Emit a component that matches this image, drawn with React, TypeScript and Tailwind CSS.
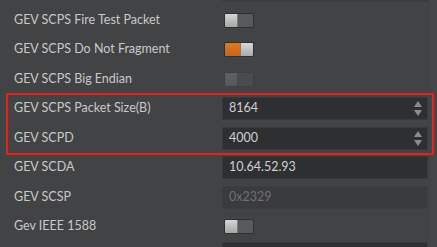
import React from "react";

function Toggle({ on = false, disabled = false }: { on?: boolean; disabled?: boolean }) {
  if (on) {
    return (
      <div className="flex h-[15px] w-[30px] rounded-[2px] overflow-hidden border border-[#2e2f31]">
        <div className="w-[16px] h-full bg-gradient-to-b from-[#dc7a22] to-[#c9641a]" />
        <div className="w-[13px] h-full bg-gradient-to-b from-[#d8d8d8] to-[#a9aaab] border-l border-[#7c7d7f]" />
      </div>
    );
  }
  return (
    <div
      className={
        "flex h-[15px] w-[30px] rounded-[2px] overflow-hidden border " +
        (disabled ? "border-[#3f4042] bg-[#4a4b4d]" : "border-[#2e2f31] bg-[#58595b]")
      }
    >
      <div
        className={
          "w-[13px] h-full border-r " +
          (disabled
            ? "bg-gradient-to-b from-[#606163] to-[#56575a] border-[#454648]"
            : "bg-gradient-to-b from-[#d6d6d6] to-[#a4a5a6] border-[#7a7b7d]")
        }
      />
    </div>
  );
}

function Spin() {
  return (
    <div className="flex flex-col items-center gap-[3px] mr-[5px]">
      <svg width="8" height="6" viewBox="0 0 8 6">
        <path d="M4 0 L8 6 L0 6 Z" fill="#8a8b8d" />
      </svg>
      <svg width="8" height="6" viewBox="0 0 8 6">
        <path d="M0 0 L8 0 L4 6 Z" fill="#8a8b8d" />
      </svg>
    </div>
  );
}

function Input({ value, spin = false, disabled = false }: { value: string; spin?: boolean; disabled?: boolean }) {
  return (
    <div
      className={
        "flex items-center justify-between h-[23px] w-[206px] border rounded-[1px] " +
        (disabled ? "bg-[#3a3b3d] border-[#3d3e40]" : "bg-[#2e2f31] border-[#38393b]")
      }
    >
      <span className={"pl-[6px] " + (disabled ? "text-[#6f7072]" : "text-[#cfd0d1]")}>{value}</span>
      {spin && <Spin />}
    </div>
  );
}

function Row({ label, children }: { label: string; children?: React.ReactNode }) {
  return (
    <div className="flex items-center h-[29.5px]">
      <div className="w-[222px] pl-[14px] text-[#c8c9ca]">{label}</div>
      <div className="flex items-center">{children}</div>
    </div>
  );
}

export default function App() {
  return (
    <div
      className="relative w-[437px] h-[247px] bg-[#424345] overflow-hidden text-[12.5px]"
      style={{ fontFamily: "Lato, 'Open Sans', sans-serif" }}
    >
      <div className="absolute left-[222px] top-0 w-[206px] h-[2px] bg-[#3c3d3f]" />
      <div className="absolute right-0 top-0 w-[6px] h-full bg-[#45464a]" />
      <div className="relative pt-[5.5px]">
        <Row label="GEV SCPS Fire Test Packet">
          <div className="pl-[2px]"><Toggle /></div>
        </Row>
        <Row label="GEV SCPS Do Not Fragment">
          <div className="pl-[2px]"><Toggle on /></div>
        </Row>
        <Row label="GEV SCPS Big Endian">
          <div className="pl-[2px]"><Toggle disabled /></div>
        </Row>
        <div className="relative">
          <Row label="GEV SCPS Packet Size(B)">
            <Input value="8164" spin />
          </Row>
          <Row label="GEV SCPD">
            <Input value="4000" spin />
          </Row>
          <div className="absolute left-[6px] right-[3px] top-[-1px] bottom-[-2px] border-2 border-[#e8201c]" />
        </div>
        <Row label="GEV SCDA">
          <Input value="10.64.52.93" />
        </Row>
        <Row label="GEV SCSP">
          <Input value="0x2329" disabled />
        </Row>
        <Row label="Gev IEEE 1588">
          <div className="pl-[2px]"><Toggle /></div>
        </Row>
        <div className="flex h-[10px]">
          <div className="w-[222px]" />
          <div className="w-[206px] h-full bg-[#2e2f31] border border-[#38393b]" />
        </div>
      </div>
    </div>
  );
}
